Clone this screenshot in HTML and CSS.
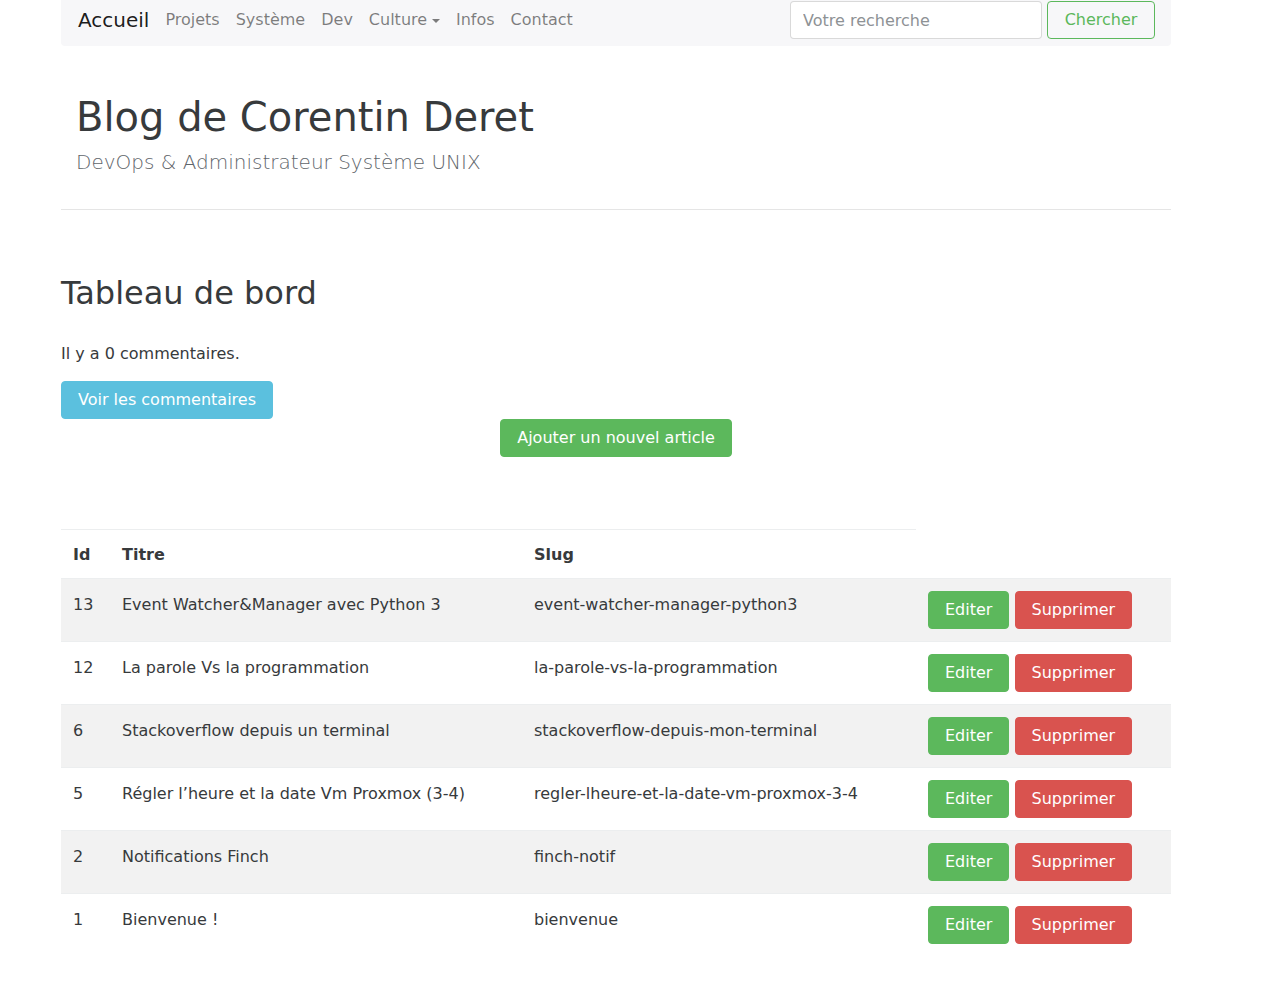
FILE: index.html
```html
<!DOCTYPE html>
<html>
<head>
<meta name="viewport" content="width=device-width, initial-scale=1">
<link rel="stylesheet" href="styles.css">
</head>
<body>

<div class="container">

  <nav class="navbar">
    <a class="navbar-brand" href="#">Accueil</a>
    <ul class="nav">
      <li><a href="#">Projets</a></li>
      <li><a href="#">Système</a></li>
      <li><a href="#">Dev</a></li>
      <li><a href="#" class="dropdown-toggle">Culture</a></li>
      <li><a href="#">Infos</a></li>
      <li><a href="#">Contact</a></li>
    </ul>
    <form class="search">
      <input type="text" class="search-input" placeholder="Votre recherche">
      <button type="button" class="btn btn-outline-success">Chercher</button>
    </form>
  </nav>

  <header class="blog-header">
    <h1>Blog de Corentin Deret</h1>
    <p class="lead">DevOps &amp; Administrateur Système UNIX</p>
  </header>
  <hr>

  <h2>Tableau de bord</h2>
  <p>Il y a 0 commentaires.</p>
  <a href="#" class="btn btn-info">Voir les commentaires</a>
  <div class="text-center">
    <a href="#" class="btn btn-success">Ajouter un nouvel article</a>
  </div>

  <table class="table">
    <colgroup>
      <col class="col-id">
      <col class="col-title">
      <col class="col-slug">
      <col class="col-actions">
    </colgroup>
    <thead>
      <tr>
        <th>Id</th>
        <th>Titre</th>
        <th>Slug</th>
      </tr>
    </thead>
    <tbody>
      <tr>
        <td>13</td>
        <td>Event Watcher&amp;Manager avec Python 3</td>
        <td>event-watcher-manager-python3</td>
        <td class="actions"><a href="#" class="btn btn-success">Editer</a> <a href="#" class="btn btn-danger">Supprimer</a></td>
      </tr>
      <tr>
        <td>12</td>
        <td>La parole Vs la programmation</td>
        <td>la-parole-vs-la-programmation</td>
        <td class="actions"><a href="#" class="btn btn-success">Editer</a> <a href="#" class="btn btn-danger">Supprimer</a></td>
      </tr>
      <tr>
        <td>6</td>
        <td>Stackoverflow depuis un terminal</td>
        <td>stackoverflow-depuis-mon-terminal</td>
        <td class="actions"><a href="#" class="btn btn-success">Editer</a> <a href="#" class="btn btn-danger">Supprimer</a></td>
      </tr>
      <tr>
        <td>5</td>
        <td>Régler l’heure et la date Vm Proxmox (3-4)</td>
        <td>regler-lheure-et-la-date-vm-proxmox-3-4</td>
        <td class="actions"><a href="#" class="btn btn-success">Editer</a> <a href="#" class="btn btn-danger">Supprimer</a></td>
      </tr>
      <tr>
        <td>2</td>
        <td>Notifications Finch</td>
        <td>finch-notif</td>
        <td class="actions"><a href="#" class="btn btn-success">Editer</a> <a href="#" class="btn btn-danger">Supprimer</a></td>
      </tr>
      <tr>
        <td>1</td>
        <td>Bienvenue !</td>
        <td>bienvenue</td>
        <td class="actions"><a href="#" class="btn btn-success">Editer</a> <a href="#" class="btn btn-danger">Supprimer</a></td>
      </tr>
    </tbody>
  </table>

</div>

</body>
</html>
```

FILE: styles.css
```css
* {
  box-sizing: border-box;
}

body {
  margin: 0;
  font-family: "DejaVu Sans", sans-serif;
  font-size: 16px;
  line-height: 1.5;
  color: #373a3c;
  background: #fff;
}

a {
  text-decoration: none;
}

.container {
  width: 1110px;
  margin-left: 61px;
}

/* Navbar */
.navbar {
  display: flex;
  align-items: center;
  height: 46px;
  padding: 1px 16px 7px 16px;
  background-color: #f7f7f9;
  border-radius: 0 0 4px 4px;
}

.navbar-brand {
  font-size: 20px;
  color: rgba(0, 0, 0, .9);
  margin-left: 1px;
  margin-right: 16px;
}

.nav {
  display: flex;
  list-style-type: none;
  margin: 0;
  padding: 0;
}

.nav li + li {
  margin-left: 16px;
}

.nav a {
  color: rgba(0, 0, 0, .5);
}

.dropdown-toggle::after {
  content: "";
  display: inline-block;
  width: 0;
  height: 0;
  margin-left: .3em;
  vertical-align: middle;
  border-top: 4px solid;
  border-right: 4px solid transparent;
  border-left: 4px solid transparent;
}

.search {
  display: flex;
  margin-left: auto;
}

.search-input {
  width: 252px;
  height: 38px;
  padding: 8px 12px;
  font-family: inherit;
  font-size: 16px;
  color: #464a4c;
  border: 1px solid rgba(0, 0, 0, .15);
  border-radius: 4px;
  margin-right: 5px;
}

.search-input::placeholder {
  color: #8e9295;
}

/* Buttons */
.btn {
  display: inline-block;
  height: 38px;
  padding: 8px 16px;
  font-family: inherit;
  font-size: 16px;
  line-height: 20px;
  border: 1px solid transparent;
  border-radius: 4px;
  color: #fff;
  cursor: pointer;
  vertical-align: middle;
}

.btn-outline-success {
  width: 108px;
  color: #5cb85c;
  background: transparent;
  border-color: #5cb85c;
}

.btn-info {
  background-color: #5bc0de;
  border-color: #5bc0de;
}

.btn-success {
  background-color: #5cb85c;
  border-color: #5cb85c;
}

.btn-danger {
  background-color: #d9534f;
  border-color: #d9534f;
}

/* Header */
.blog-header {
  padding: 49px 15px 0 15px;
}

h1 {
  font-size: 40px;
  font-weight: normal;
  line-height: 1.1;
  margin: 0 0 8px 0;
  color: #373a3c;
}

.lead {
  font-size: 20px;
  font-weight: 300;
  color: #5f666b;
  margin: 0 0 32px 0;
}

hr {
  margin: 0;
  border: 0;
  border-top: 1px solid rgba(0, 0, 0, .1);
}

h2 {
  font-size: 32px;
  font-weight: normal;
  line-height: 1.1;
  margin: 66px 0 31px 0;
  color: #373a3c;
}

p {
  margin: 0 0 15px 0;
}

.text-center {
  text-align: center;
}

/* Table */
.table {
  width: 100%;
  margin-top: 72px;
  border-collapse: collapse;
  table-layout: fixed;
}

.col-id { width: 49px; }
.col-title { width: 412px; }
.col-slug { width: 394px; }
.col-actions { width: 255px; }

.table th,
.table td {
  text-align: left;
  vertical-align: top;
  border-top: 1px solid #eceeef;
}

.table th {
  padding: 13px 12px 11px 12px;
}

.table td {
  padding: 14px 12px 10px 12px;
}

.table td.actions {
  padding: 12px;
}

.table tbody tr:nth-child(odd) {
  background-color: rgba(0, 0, 0, .05);
}
```
